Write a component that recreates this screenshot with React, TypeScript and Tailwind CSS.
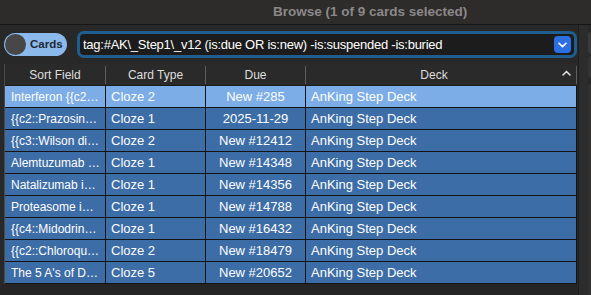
import React from 'react';

type Row = { sort: string; type: string; due: string; deck: string; selected?: boolean };

const rows: Row[] = [
  { sort: 'Interferon {{c2::alpha}} is used', type: 'Cloze 2', due: 'New #285', deck: 'AnKing Step Deck', selected: true },
  { sort: '{{c2::Prazosin}} is an alpha', type: 'Cloze 1', due: '2025-11-29', deck: 'AnKing Step Deck' },
  { sort: '{{c3::Wilson disease}}', type: 'Cloze 2', due: 'New #12412', deck: 'AnKing Step Deck' },
  { sort: 'Alemtuzumab is a', type: 'Cloze 1', due: 'New #14348', deck: 'AnKing Step Deck' },
  { sort: 'Natalizumab is an integrin', type: 'Cloze 1', due: 'New #14356', deck: 'AnKing Step Deck' },
  { sort: 'Proteasome inhibitor', type: 'Cloze 1', due: 'New #14788', deck: 'AnKing Step Deck' },
  { sort: '{{c4::Midodrine}} is an alpha', type: 'Cloze 1', due: 'New #16432', deck: 'AnKing Step Deck' },
  { sort: '{{c2::Chloroquine}}', type: 'Cloze 2', due: 'New #18479', deck: 'AnKing Step Deck' },
  { sort: "The 5 A's of Depression", type: 'Cloze 5', due: 'New #20652', deck: 'AnKing Step Deck' },
];

const App: React.FC = () => {
  return (
    <div
      className="w-[591px] h-[295px] overflow-hidden bg-[#282828] flex flex-col"
      style={{ fontFamily: '"Liberation Sans", Arial, sans-serif' }}
    >
      {/* title bar */}
      <div className="h-[25px] shrink-0 bg-[#2e2b2b] border-b border-[#161616] flex items-center">
        <div className="w-full pl-[273px] text-[13.5px] font-bold text-[#8a8888]">Browse (1 of 9 cards selected)</div>
      </div>

      <div className="flex flex-1 min-h-0">
        <div className="w-[578px] shrink-0 flex flex-col">
          {/* toolbar */}
          <div className="flex items-center h-[39px] pl-[4px] pr-[1px]">
            <div className="w-[63px] h-[23px] rounded-full bg-[#8bb9ec] flex items-center pl-[1px]">
              <div className="w-[21px] h-[21px] rounded-full bg-[#474747]" />
              <span className="ml-[4px] text-[11.5px] font-bold text-[#1f2a36]">Cards</span>
            </div>
            <div className="ml-[10px] w-[500px] h-[27px] rounded-[7px] border-[3px] border-[#1f5e8e] bg-[#1c1c1c] flex items-center pl-[3px] pr-[3px]">
              <span className="flex-1 text-[13px] tracking-[-0.25px] text-white whitespace-nowrap overflow-hidden">
                tag:#AK\_Step1\_v12 (is:due OR is:new) -is:suspended -is:buried
              </span>
              <div className="w-[17px] h-[17px] rounded-[4px] bg-[#2c6fe2] flex items-center justify-center">
                <svg width="9" height="6" viewBox="0 0 9 6">
                  <path d="M1 1.2 L4.5 4.6 L8 1.2" stroke="white" strokeWidth="1.6" fill="none" strokeLinecap="round" strokeLinejoin="round" />
                </svg>
              </div>
            </div>
          </div>

          {/* table */}
          <div className="ml-[4px] w-[573px] flex flex-col border-l border-[#4a4a4a]">
            <div className="h-[22px] flex items-center bg-[#2a2a2a] text-[12px] text-[#dedede] border-b border-[#1a1a1a]">
              <div className="w-[101px] text-center border-r border-[#5e5e5e]">Sort Field</div>
              <div className="w-[100px] text-center border-r border-[#5e5e5e]">Card Type</div>
              <div className="w-[100px] text-center border-r border-[#5e5e5e]">Due</div>
              <div className="flex-1 relative text-center pr-[14px] border-r border-[#5e5e5e]">
                Deck
                <svg className="absolute right-[5px] top-[4px]" width="9" height="6" viewBox="0 0 9 6">
                  <path d="M1 5 L4.5 1.4 L8 5" stroke="#e0e0e0" strokeWidth="1.5" fill="none" strokeLinecap="round" strokeLinejoin="round" />
                </svg>
              </div>
            </div>
            {rows.map((r, i) => (
              <div
                key={i}
                className={`h-[22px] flex text-white border-b border-[#141414] ${r.selected ? 'bg-[#7cade6]' : 'bg-[#3d6da7]'}`}
              >
                <div className="w-[101px] min-w-0 pl-[6px] pr-[5px] flex items-center border-r border-[#141414] text-[12px]">
                  <span className="truncate">{r.sort}</span>
                </div>
                <div className="w-[100px] pl-[5px] flex items-center border-r border-[#141414] text-[13px]">{r.type}</div>
                <div className="w-[100px] flex items-center justify-center border-r border-[#141414] text-[13px]">{r.due}</div>
                <div className="flex-1 pl-[5px] flex items-center border-r border-[#141414] text-[13px]">{r.deck}</div>
              </div>
            ))}
          </div>
          <div className="flex-1 bg-[#252525]" />
        </div>

        {/* right splitter edge */}
        <div className="flex-1 flex">
          <div className="w-[10px] bg-[#2c2c2c] border-l border-[#1e1e1e]" />
          <div className="flex-1 flex flex-col gap-[2px] pt-[7px]">
            <div className="h-[22px] rounded-l-[4px] bg-[#3a3a3a]" />
            <div className="h-[22px] rounded-l-[4px] bg-[#333333]" />
            <div className="flex-1 mt-[4px] rounded-tl-[4px] bg-[#303030]" />
          </div>
        </div>
      </div>
    </div>
  );
};

export default App;
